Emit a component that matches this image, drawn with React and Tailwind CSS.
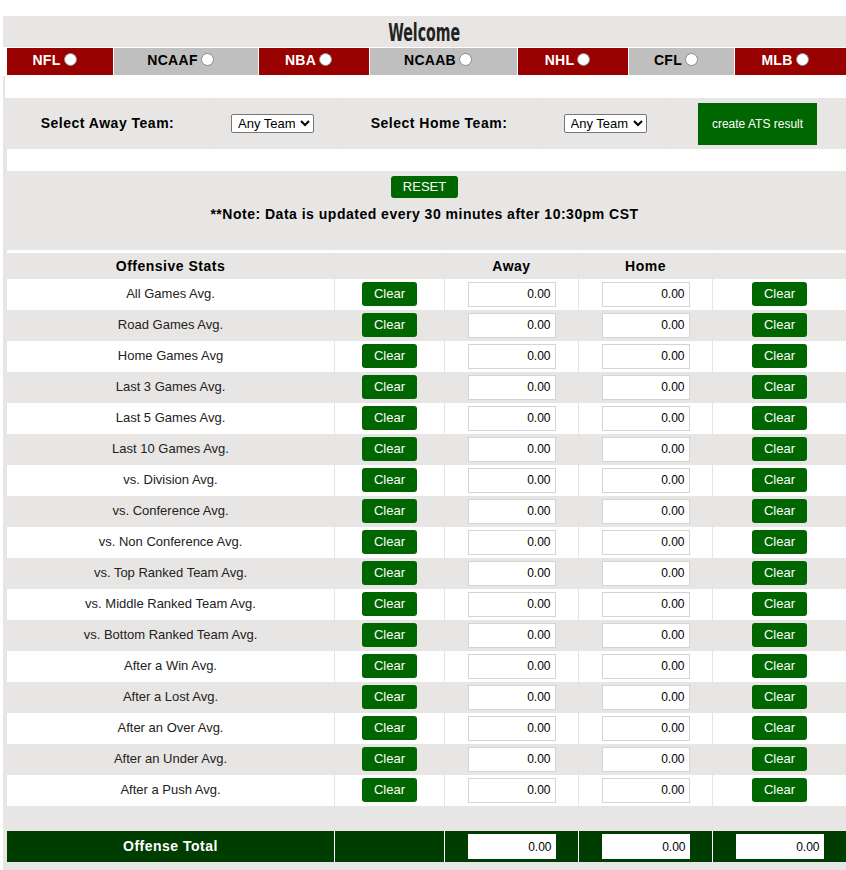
import React from 'react'

const leagues = [
  { name: 'NFL', w: 'w-[106px]', red: true },
  { name: 'NCAAF', w: 'w-[144px]', red: false },
  { name: 'NBA', w: 'w-[110px]', red: true },
  { name: 'NCAAB', w: 'w-[147px]', red: false },
  { name: 'NHL', w: 'w-[110px]', red: true },
  { name: 'CFL', w: 'w-[105px]', red: false },
  { name: 'MLB', w: 'flex-1', red: true },
]

const stats = [
  'All Games Avg.',
  'Road Games Avg.',
  'Home Games Avg',
  'Last 3 Games Avg.',
  'Last 5 Games Avg.',
  'Last 10 Games Avg.',
  'vs. Division Avg.',
  'vs. Conference Avg.',
  'vs. Non Conference Avg.',
  'vs. Top Ranked Team Avg.',
  'vs. Middle Ranked Team Avg.',
  'vs. Bottom Ranked Team Avg.',
  'After a Win Avg.',
  'After a Lost Avg.',
  'After an Over Avg.',
  'After an Under Avg.',
  'After a Push Avg.',
]

const cols = 'grid grid-cols-[327px_110px_134px_134px_1fr]'
const sep = 'border-l border-[#e6e4e2]'
const boldTxt = 'text-[14px] font-bold tracking-[0.5px]'

function ClearBtn() {
  return (
    <button className="w-[55px] h-[24px] rounded-[3px] bg-[#006600] text-white text-[13px]">
      Clear
    </button>
  )
}

function NumBox({ plain }) {
  return (
    <input
      readOnly
      value="0.00"
      className={`w-[88px] h-[25px] bg-white text-right pr-[4px] text-[12px] text-black outline-none ${plain ? '' : 'border border-[#d4d4d4]'}`}
    />
  )
}

function TeamSelect() {
  return (
    <select className="h-[19px] w-[83px] border border-[#767676] rounded-[2px] bg-white text-[13px] text-black px-[2px]">
      <option>Any Team</option>
    </select>
  )
}

export default function App() {
  return (
    <div className="bg-white w-[846px] h-[870px] overflow-hidden pt-4 pl-[3px] text-black" style={{ fontFamily: '"Liberation Sans", Arial, sans-serif' }}>
      <div className="bg-[#e8e6e4]">
        {/* Title */}
        <div className="h-[31px] flex items-center justify-center">
          <h1
            className="text-[25px] font-bold text-[#222] leading-none scale-x-[0.63] pt-[1px]"
            style={{ fontFamily: '"DejaVu Sans Condensed", "DejaVu Sans", sans-serif' }}
          >
            Welcome
          </h1>
        </div>

        {/* League tabs */}
        <div className="bg-white flex gap-px pt-px pb-px pl-[4px]">
          {leagues.map(l => (
            <label
              key={l.name}
              className={`${l.w} h-[27px] flex items-center justify-center gap-[3px] pr-[11px] text-[14px] font-bold tracking-[0.3px] ${l.red ? 'bg-[#990000] text-white' : 'bg-[#bfbfbf] text-black'}`}
            >
              <span className="-mt-[2px]">{l.name}</span>
              <span className="w-[13px] h-[13px] rounded-full bg-white border border-[#8a8a8a] -mt-[5px]" />
            </label>
          ))}
        </div>

        <div className="ml-[2px] h-[22px] bg-white" />

        {/* Team selects */}
        <div className="pl-[4px] h-[51px] grid grid-cols-[201px_128px_205px_127px_1fr]">
          <div className={`flex items-center justify-center ${boldTxt}`}>Select Away Team:</div>
          <div className={`flex items-center justify-center ${sep}`}><TeamSelect /></div>
          <div className={`flex items-center justify-center ${boldTxt} ${sep}`}>Select Home Team:</div>
          <div className={`flex items-center justify-center ${sep}`}><TeamSelect /></div>
          <div className={`flex items-start justify-center pt-[5px] ${sep}`}>
            <button className="w-[119px] h-[42px] bg-[#006600] text-white text-[12px]">create ATS result</button>
          </div>
        </div>

        <div className="ml-[4px] h-[22px] bg-white" />

        {/* Reset + note */}
        <div className="h-[79px] flex flex-col items-center pt-[5px]">
          <button className="w-[67px] h-[22px] rounded-[3px] bg-[#006600] text-white text-[13px]">RESET</button>
          <p className={`mt-[6px] ${boldTxt}`}>**Note: Data is updated every 30 minutes after 10:30pm CST</p>
        </div>

        <div className="ml-[4px] h-[3px] bg-white" />

        {/* Stats table */}
        <div className="pl-[4px]">
          <div className={`${cols} h-[26px] ${boldTxt}`}>
            <div className="flex items-center justify-center">Offensive Stats</div>
            <div className={sep} />
            <div className={`flex items-center justify-center ${sep}`}>Away</div>
            <div className={`flex items-center justify-center ${sep}`}>Home</div>
            <div className={sep} />
          </div>

          {stats.map((s, i) => (
            <div key={s} className={`${cols} h-[31px] ${i % 2 === 0 ? 'bg-white' : 'bg-[#e8e6e4]'}`}>
              <div className="flex items-center justify-center text-[13px] text-[#222] pb-[1px]">{s}</div>
              <div className={`flex items-center justify-center pb-[1px] ${sep}`}><ClearBtn /></div>
              <div className={`flex items-center justify-center pb-[1px] ${sep}`}><NumBox /></div>
              <div className={`flex items-center justify-center pb-[1px] ${sep}`}><NumBox /></div>
              <div className={`flex items-center justify-center pb-[1px] ${sep}`}><ClearBtn /></div>
            </div>
          ))}

          <div className={`${cols} h-[25px]`}>
            <div />
            <div className={sep} />
            <div className={sep} />
            <div className={sep} />
            <div className={sep} />
          </div>

          <div className={`${cols} h-[31px] bg-[#003d00]`}>
            <div className={`flex items-center justify-center text-white ${boldTxt}`}>Offense Total</div>
            <div className="border-l border-white" />
            <div className="flex items-center justify-center border-l border-white"><NumBox plain /></div>
            <div className="flex items-center justify-center border-l border-white"><NumBox plain /></div>
            <div className="flex items-center justify-center border-l border-white"><NumBox plain /></div>
          </div>

          <div className={`${cols} h-[20px]`}>
            <div />
            <div className={sep} />
            <div className={sep} />
            <div className={sep} />
            <div className={sep} />
          </div>
        </div>
      </div>
    </div>
  )
}
